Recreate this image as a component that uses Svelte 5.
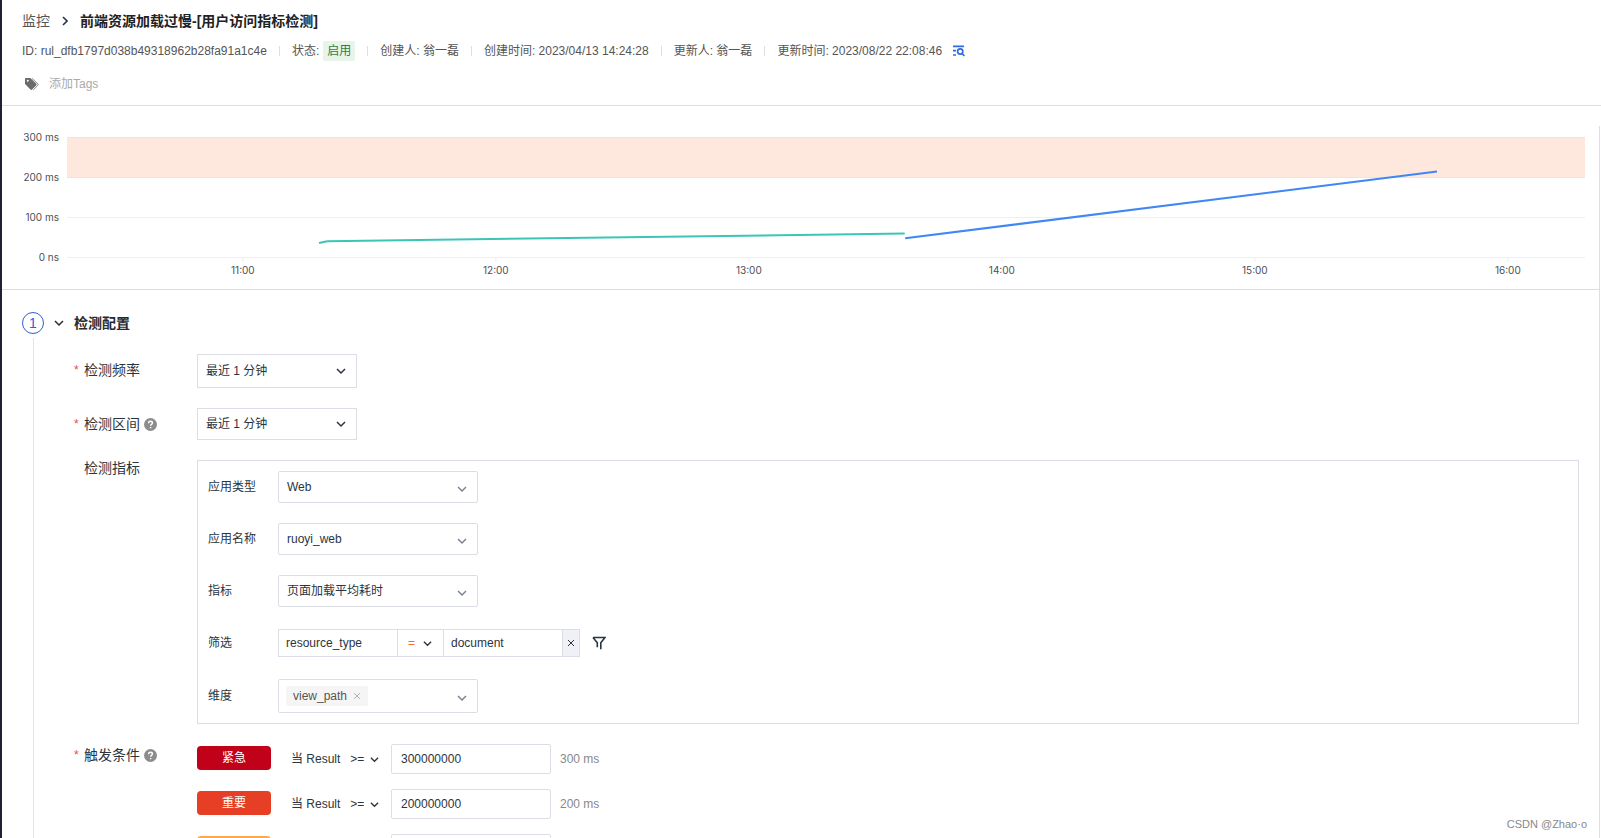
<script lang="ts">
  type Series = { color: string; points: [number, number][] };

  const meta = [
    { label: "创建人", value: "翁一磊" },
    { label: "创建时间", value: "2023/04/13 14:24:28" },
    { label: "更新人", value: "翁一磊" },
    { label: "更新时间", value: "2023/08/22 22:08:46" },
  ];

  // six hour window, in decimal hours
  const windowStart = 10.305;
  const windowHours = 6;
  const hours = [11, 12, 13, 14, 15, 16];
  const gridValues = [300, 200, 100, 0];

  const series: Series[] = [
    { color: "#3cc4b8", points: [[11.301, 36], [11.333, 40.5], [13.616, 60]] },
    { color: "#3f87f5", points: [[13.618, 48], [15.72, 215]] },
  ];

  const toX = (hour: number) => `${(((hour - windowStart) / windowHours) * 100).toFixed(3)}%`;
  const toY = (ms: number) => 151.5 - ms * 0.4;

  const fields = [
    { id: "app-type", label: "应用类型", value: "Web" },
    { id: "app-name", label: "应用名称", value: "ruoyi_web" },
    { id: "metric", label: "指标", value: "页面加载平均耗时" },
  ];

  let triggers = $state([
    { level: "critical", label: "紧急", value: "300000000", hint: "300 ms" },
    { level: "error", label: "重要", value: "200000000", hint: "200 ms" },
    { level: "warning", label: "", value: "", hint: "" },
  ]);

  let filterKey = $state("resource_type");
  let filterValue = $state("document");
</script>

{#snippet chevron()}
  <svg class="chevron" viewBox="0 0 10 10" aria-hidden="true">
    <path d="M1 3 5 7 9 3" />
  </svg>
{/snippet}

{#snippet help()}
  <svg class="help" viewBox="0 0 13 13" aria-hidden="true">
    <circle cx="6.5" cy="6.5" r="6.5" />
    <path d="M4.6 5.2c0-1.2.8-1.9 1.9-1.9s1.9.7 1.9 1.7c0 1.3-1.8 1.4-1.8 2.7M6.6 9v1.2" />
  </svg>
{/snippet}

<div class="app">
  <header>
    <nav class="crumbs">
      <a href="#monitors">监控</a>
      <svg class="crumb-arrow" viewBox="0 0 6 10" aria-hidden="true"><path d="M1 1 5 5 1 9" /></svg>
      <h1>前端资源加载过慢-[用户访问指标检测]</h1>
    </nav>
    <div class="meta">
      <span class="meta-item">ID: rul_dfb1797d038b49318962b28fa91a1c4e</span>
      <span class="meta-item">状态: <span class="status">启用</span></span>
      {#each meta as item}
        <span class="meta-item">{item.label}: {item.value}</span>
      {/each}
      <button class="audit" aria-label="查看审计">
        <svg viewBox="0 0 13 12" aria-hidden="true">
          <path d="M1 1.3h11M1 5.6h3M1 10h3" />
          <circle cx="8.2" cy="6.5" r="2.6" />
          <path d="M10.1 8.5 12.3 11" />
        </svg>
      </button>
    </div>
    <div class="tags">
      <svg class="tag-icon" viewBox="0 0 14 13" aria-hidden="true">
        <path d="M0 1.2C0 .5.5 0 1.2 0h4.2l5.9 5.7c.5.5.5 1.1 0 1.6l-4.2 4.2c-.5.5-1.1.5-1.6 0L0 5.9z" />
        <path class="tag-edge" d="M7 .3l5.9 5.6c.4.4.4.9 0 1.3L8.4 11.9" />
        <circle cx="2.8" cy="2.8" r="1" />
      </svg>
      <button class="add-tags">添加Tags</button>
    </div>
  </header>

  <div class="body">
    <main>
      <section class="chart">
        <svg aria-label="检测指标预览">
          <rect class="threshold" x="0" y={toY(300)} width="100%" height="40" />
          {#each gridValues as value}
            <line class="grid" x1="0" x2="100%" y1={toY(value)} y2={toY(value)} />
            <text class="tick" x="-8" y={toY(value) + 3} text-anchor="end">
              {value} {value ? "ms" : "ns"}
            </text>
          {/each}
          {#each hours as hour}
            <line class="grid" x1={toX(hour)} x2={toX(hour)} y1="152" y2="156" />
            <text class="tick" x={toX(hour)} y="168" text-anchor="middle">{hour}:00</text>
          {/each}
          {#each series as { color, points }}
            {#each points.slice(1) as [hour, ms], i}
              <line
                class="series"
                stroke={color}
                x1={toX(points[i][0])}
                y1={toY(points[i][1])}
                x2={toX(hour)}
                y2={toY(ms)}
              />
            {/each}
          {/each}
        </svg>
      </section>

      <section class="step">
        <div class="rail"><span class="step-number">1</span></div>
        <div class="step-content">
          <button class="step-title">
            {@render chevron()}
            检测配置
          </button>

          <form>
            <div class="row">
              <label class="row-label required" for="frequency">检测频率</label>
              <div class="select medium tall">
                <select id="frequency"><option>最近 1 分钟</option></select>
                {@render chevron()}
              </div>
            </div>

            <div class="row">
              <label class="row-label required" for="interval">检测区间{@render help()}</label>
              <div class="select medium">
                <select id="interval"><option>最近 1 分钟</option></select>
                {@render chevron()}
              </div>
            </div>

            <div class="row">
              <span class="row-label compact">检测指标</span>
              <div class="panel">
                {#each fields as field}
                  <div class="field">
                    <label for={field.id}>{field.label}</label>
                    <div class="select wide">
                      <select id={field.id}><option>{field.value}</option></select>
                      {@render chevron()}
                    </div>
                  </div>
                {/each}

                <div class="field">
                  <label for="filter-key">筛选</label>
                  <div class="filter">
                    <input id="filter-key" bind:value={filterKey} />
                    <div class="select operator">
                      <select aria-label="运算符"><option>=</option></select>
                      {@render chevron()}
                    </div>
                    <input aria-label="筛选值" bind:value={filterValue} />
                    <button type="button" class="remove" aria-label="删除筛选">
                      <svg viewBox="0 0 8 8" aria-hidden="true"><path d="M1 1l6 6M7 1 1 7" /></svg>
                    </button>
                    <button type="button" class="funnel" aria-label="添加筛选">
                      <svg viewBox="0 0 14 14" aria-hidden="true">
                        <path d="M1 1.5h12L8.8 6.8v6.4M1 1.5l4.3 5.3v4.4" />
                      </svg>
                    </button>
                  </div>
                </div>

                <div class="field">
                  <label for="dimension">维度</label>
                  <button type="button" id="dimension" class="multi">
                    <span class="chip">
                      view_path
                      <svg viewBox="0 0 8 8" aria-hidden="true"><path d="M1 1l6 6M7 1 1 7" /></svg>
                    </span>
                    {@render chevron()}
                  </button>
                </div>
              </div>
            </div>

            <div class="row">
              <span class="row-label required triggers-label">触发条件{@render help()}</span>
              <div class="triggers">
                {#each triggers as trigger}
                  <div class="trigger">
                    <span class="level {trigger.level}">{trigger.label}</span>
                    <div class="condition">
                      {#if trigger.label}
                        <label for={trigger.level}>当 Result</label>
                        <div class="select compare">
                          <select aria-label="比较"><option>&gt;=</option></select>
                          {@render chevron()}
                        </div>
                      {/if}
                    </div>
                    <input id={trigger.level} aria-label="阈值" bind:value={trigger.value} />
                    <span class="hint">{trigger.hint}</span>
                  </div>
                {/each}
              </div>
            </div>
          </form>
        </div>
      </section>
    </main>
    <div class="track"></div>
  </div>

  <span class="watermark">CSDN @Zhao·o</span>
</div>

<style>
  :global(body) {
    background: #fff;
  }

  .app {
    --border: #dcdee5;
    --text: #2b3540;

    box-sizing: border-box;
    position: relative;
    display: flex;
    flex-direction: column;
    height: 100vh;
    overflow: hidden;
    border-left: 2px solid #1d2133;
    color: var(--text);
    font: 12px/20px "Liberation Sans", "Noto Sans CJK SC", sans-serif;
  }

  input,
  select,
  button {
    box-sizing: border-box;
    min-width: 0;
    margin: 0;
    border-radius: 0;
    color: inherit;
    font: inherit;
  }

  button {
    padding: 0;
    border: 0;
    background: none;
    cursor: pointer;
  }

  svg {
    flex: none;
    fill: none;
    stroke: currentColor;
  }

  header {
    padding: 0 20px 11px;
    border-bottom: 1px solid #dfdfe2;
  }

  .crumbs {
    display: flex;
    align-items: center;
    height: 41px;
    font-size: 14px;
  }

  .crumbs a {
    color: #555;
    text-decoration: none;
  }

  .crumb-arrow {
    width: 6px;
    height: 10px;
    margin: 0 12px;
    stroke: #27364a;
    stroke-width: 1.6;
  }

  h1 {
    margin: 0;
    color: #222;
    font-size: 14px;
    font-weight: 700;
  }

  .meta {
    display: flex;
    align-items: center;
    height: 20px;
    color: #555;
  }

  .meta-item {
    display: flex;
    align-items: center;
    gap: 4px;
    white-space: nowrap;
  }

  .meta-item + .meta-item::before {
    width: 1px;
    height: 10px;
    margin: 0 8px 0 12px;
    background: #dcdee2;
    content: "";
  }

  .status {
    padding: 0 4px;
    border-radius: 2px;
    background: #e6f4ea;
    color: #2f7d43;
  }

  .audit {
    display: flex;
    margin-left: 10px;
    color: #2f6be4;
  }

  .audit svg {
    width: 13px;
    height: 12px;
    stroke-width: 1.7;
  }

  .tags {
    display: flex;
    align-items: center;
    gap: 10px;
    height: 20px;
    margin-top: 13px;
    padding-left: 3px;
  }

  .tag-icon {
    width: 14px;
    height: 13px;
    fill: #6b6b6b;
    stroke: none;
  }

  .tag-icon circle {
    fill: #fff;
  }

  .tag-icon .tag-edge {
    fill: none;
    stroke: #8b8b8b;
  }

  .add-tags {
    color: #aaa;
  }

  .body {
    display: flex;
    flex: 1;
    min-height: 0;
  }

  main {
    display: flex;
    flex: 1;
    flex-direction: column;
    min-width: 0;
  }

  .track {
    width: 1px;
    margin-top: 20px;
    border-left: 1px solid var(--border);
  }

  .chart {
    padding: 0 14px 0 65px;
    border-bottom: 1px solid var(--border);
  }

  .chart svg {
    display: block;
    width: 100%;
    height: 183px;
    overflow: visible;
  }

  .threshold {
    fill: #fee8de;
    stroke: none;
  }

  .grid {
    stroke: #333;
    stroke-opacity: 0.08;
  }

  .tick {
    fill: #4b4f55;
    stroke: none;
    font: 10px Inter, sans-serif;
  }

  .series {
    stroke-width: 2;
  }

  .step {
    display: flex;
    flex: 1;
    gap: 10px;
    padding: 22px 20px 0;
  }

  .rail {
    display: flex;
    flex: none;
    flex-direction: column;
    align-items: center;
    gap: 4px;
    width: 22px;
  }

  .rail::after {
    flex: 1;
    width: 1px;
    background: #e2e3e8;
    content: "";
  }

  .step-number {
    box-sizing: border-box;
    width: 22px;
    height: 22px;
    border: 1px solid #2f5fd0;
    border-radius: 50%;
    color: #2f5fd0;
    font-size: 14px;
    text-align: center;
  }

  .step-content {
    flex: 1;
    min-width: 0;
  }

  .step-title {
    display: flex;
    align-items: center;
    gap: 10px;
    height: 22px;
    color: #222c36;
    font-size: 14px;
    font-weight: 700;
  }

  .chevron {
    width: 10px;
    height: 10px;
    stroke-width: 1.5;
  }

  form {
    display: flex;
    flex-direction: column;
    gap: 20px;
    margin-top: 20px;
    padding-left: 20px;
  }

  .row {
    display: grid;
    grid-template-columns: 123px 1fr;
    align-items: start;
  }

  .row-label {
    display: flex;
    align-items: center;
    padding-left: 10px;
    font-size: 14px;
    line-height: 32px;
  }

  .row-label.required {
    padding-left: 0;
  }

  .row-label.required::before {
    width: 10px;
    color: #f04a3a;
    font-size: 12px;
    content: "*";
  }

  .row-label.compact {
    line-height: 16px;
  }

  .row-label.triggers-label {
    line-height: 22px;
  }

  .help {
    width: 13px;
    height: 13px;
    margin-left: 4px;
  }

  .help circle {
    fill: #8c8c8c;
    stroke: none;
  }

  .help path {
    stroke: #fff;
    stroke-width: 1.4;
  }

  .select {
    display: grid;
    grid-template-columns: 1fr 10px 11px;
    align-items: center;
  }

  .select select {
    grid-area: 1 / 1 / 2 / -1;
    width: 100%;
    height: 32px;
    padding: 0 24px 0 8px;
    border: 1px solid var(--border);
    background: #fff;
    appearance: none;
  }

  .select .chevron {
    grid-area: 1 / 2;
    pointer-events: none;
  }

  .medium {
    width: 160px;
  }

  .tall select {
    height: 34px;
  }

  .wide {
    width: 200px;
  }

  .wide select {
    border-radius: 2px;
  }

  .wide .chevron,
  .multi .chevron {
    margin-top: 3px;
    stroke: #7c8291;
  }

  .panel {
    display: flex;
    flex-direction: column;
    gap: 20px;
    padding: 10px;
    border: 1px solid var(--border);
  }

  .field {
    display: grid;
    grid-template-columns: 70px 1fr;
    align-items: center;
    min-height: 32px;
  }

  .filter {
    display: flex;
    align-items: center;
  }

  .filter input {
    width: 120px;
    height: 28px;
    padding: 0 7px;
    border: 1px solid var(--border);
  }

  .operator {
    grid-template-columns: 1fr 9px 11px;
    width: 45px;
  }

  .operator select {
    height: 28px;
    padding: 0 20px 0 10px;
    border-width: 1px 0;
    color: #ff6b2c;
  }

  .operator .chevron,
  .compare .chevron {
    width: 9px;
    height: 9px;
  }

  .remove {
    display: grid;
    place-items: center;
    width: 17px;
    height: 28px;
    border: 1px solid var(--border);
    border-left: 0;
    background: #f0f1f7;
  }

  .remove svg {
    width: 8px;
    height: 8px;
  }

  .funnel {
    display: flex;
    margin-left: 12px;
  }

  .funnel svg {
    width: 14px;
    height: 14px;
    stroke-width: 1.6;
  }

  .multi {
    display: flex;
    align-items: center;
    justify-content: space-between;
    width: 200px;
    height: 34px;
    padding: 0 10px 0 7px;
    border: 1px solid var(--border);
    border-radius: 2px;
  }

  .chip {
    display: flex;
    align-items: center;
    gap: 6px;
    padding: 0 7px;
    border-radius: 2px;
    background: #f5f5f5;
    color: #555;
  }

  .chip svg {
    width: 8px;
    height: 8px;
    stroke: #b3b3b3;
  }

  .triggers {
    display: flex;
    flex-direction: column;
    gap: 15px;
  }

  .trigger {
    display: flex;
    align-items: center;
    height: 30px;
  }

  .level {
    width: 74px;
    height: 24px;
    margin: 0 20px 2px 0;
    border-radius: 4px;
    color: #fff;
    line-height: 24px;
    text-align: center;
  }

  .critical {
    background: #c1001a;
  }

  .error {
    background: #e63f25;
  }

  .warning {
    background: #ffa64a;
  }

  .condition {
    display: flex;
    align-items: center;
    width: 100px;
  }

  .compare {
    grid-template-columns: 1fr 9px;
    width: 29px;
    margin-left: 10px;
  }

  .compare select {
    height: 28px;
    padding: 0;
    border: 0;
  }

  .trigger input {
    width: 160px;
    height: 30px;
    padding: 0 9px;
    border: 1px solid var(--border);
    border-radius: 2px;
  }

  .hint {
    margin-left: 9px;
    color: #888;
  }

  .watermark {
    position: absolute;
    right: 14px;
    bottom: 4px;
    color: #888;
    font-size: 11px;
  }
</style>
